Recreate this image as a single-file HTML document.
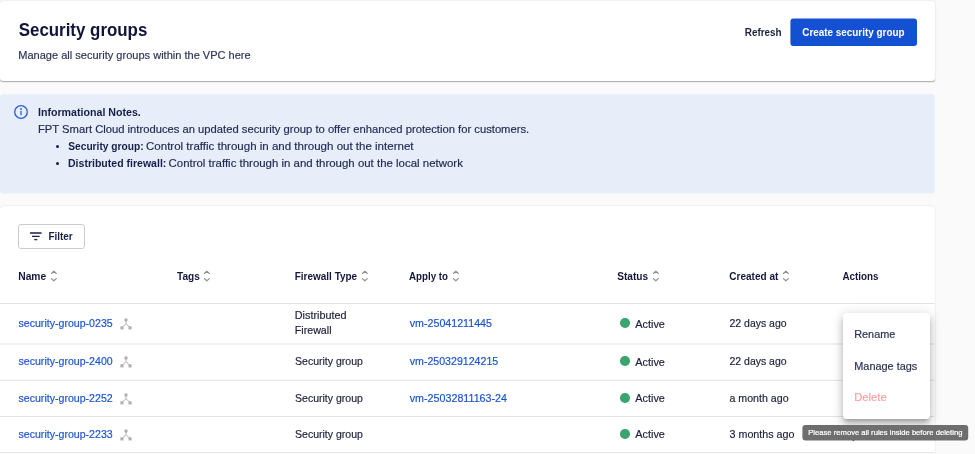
<!DOCTYPE html>
<html lang="en">
<head>
<meta charset="utf-8">
<title>Security groups</title>
<style>
*{box-sizing:border-box;margin:0;padding:0}
html,body{width:975px;height:454px;overflow:hidden;background:#fafafa;font-family:"Liberation Sans",sans-serif}
.t{position:absolute;white-space:nowrap;line-height:1;transform-origin:0 0}
.n{-webkit-text-stroke:.18px currentColor}
#hdr{position:absolute;left:0;top:1px;width:935px;height:80.4px;background:#fff;border-radius:3px;box-shadow:0 1.6px .9px -.8px rgba(0,0,0,.17),0 .9px .9px 0 rgba(0,0,0,.11),0 .8px 2.3px 0 rgba(0,0,0,.1)}
#filter{position:absolute;left:18px;top:224px;width:67px;height:25px;border:1px solid #cbcbcb;border-radius:3px;background:#fff}
.bul{position:absolute;left:55.5px;width:3.6px;height:3.6px;border-radius:50%;background:#14204a}
.dot{position:absolute;width:9.6px;height:9.6px;border-radius:50%;background:#3ba570}
#menu{position:absolute;left:843px;top:313px;width:86.8px;height:105.8px;background:#fff;border-radius:4px;box-shadow:0 3.8px 3.8px -2.3px rgba(0,0,0,.2),0 6px 7.7px .8px rgba(0,0,0,.14),0 2.3px 10.8px 1.5px rgba(0,0,0,.12)}
#t_tip{-webkit-text-stroke:.22px #fff}
#txt{position:absolute;left:0;top:0;width:975px;height:454px;will-change:transform}
svg{position:absolute;overflow:visible}
</style>
</head>
<body>
<div id="hdr"></div>
<svg style="left:0;top:0" width="975" height="60" viewBox="0 0 975 60"><rect x="790.4" y="18.5" width="126.6" height="27.6" rx="3" fill="#1450d2"/></svg>
<svg style="left:0;top:0" width="975" height="454" viewBox="0 0 975 454"><rect x="0" y="94.3" width="934.6" height="99.3" rx="3" fill="#e7edf9"/></svg>
<svg style="left:14px;top:104.9px" width="14" height="14" viewBox="0 0 14 14"><circle cx="7" cy="7" r="6.3" fill="none" stroke="#2a5bd7" stroke-width="1.3"/><rect x="6.35" y="5.9" width="1.3" height="4.3" fill="#2a5bd7"/><circle cx="7" cy="4" r=".9" fill="#2a5bd7"/></svg>
<div class="bul" style="top:144.8px"></div>
<div class="bul" style="top:161.5px"></div>
<svg style="left:0;top:0" width="975" height="454" viewBox="0 0 975 454"><rect x="-.4" y="205.8" width="935.6" height="260" rx="4.4" fill="none" stroke="#000" stroke-opacity=".045" stroke-width="1.2"/><rect x="0" y="206.2" width="934.8" height="260" rx="4" fill="#fff"/></svg>
<div id="filter"></div>
<svg style="left:29.6px;top:232.3px" width="12" height="9" viewBox="0 0 12 9"><path d="M0 1h11.6M2 4.3h7.6M4.3 7.6h3" stroke="#1a1f40" stroke-width="1.3" fill="none"/></svg>
<svg style="left:50.9px;top:270.4px" width="6" height="12" viewBox="0 0 6 12"><path d="M.4 3.5 2.85 1.3 5.3 3.5M.4 8.6 2.85 10.8 5.3 8.6" fill="none" stroke="#8e8e8e" stroke-width="1.15" stroke-linecap="round" stroke-linejoin="round"/></svg>
<svg style="left:204.3px;top:270.4px" width="6" height="12" viewBox="0 0 6 12"><path d="M.4 3.5 2.85 1.3 5.3 3.5M.4 8.6 2.85 10.8 5.3 8.6" fill="none" stroke="#8e8e8e" stroke-width="1.15" stroke-linecap="round" stroke-linejoin="round"/></svg>
<svg style="left:361.5px;top:270.4px" width="6" height="12" viewBox="0 0 6 12"><path d="M.4 3.5 2.85 1.3 5.3 3.5M.4 8.6 2.85 10.8 5.3 8.6" fill="none" stroke="#8e8e8e" stroke-width="1.15" stroke-linecap="round" stroke-linejoin="round"/></svg>
<svg style="left:452.7px;top:270.4px" width="6" height="12" viewBox="0 0 6 12"><path d="M.4 3.5 2.85 1.3 5.3 3.5M.4 8.6 2.85 10.8 5.3 8.6" fill="none" stroke="#8e8e8e" stroke-width="1.15" stroke-linecap="round" stroke-linejoin="round"/></svg>
<svg style="left:652.5px;top:270.4px" width="6" height="12" viewBox="0 0 6 12"><path d="M.4 3.5 2.85 1.3 5.3 3.5M.4 8.6 2.85 10.8 5.3 8.6" fill="none" stroke="#8e8e8e" stroke-width="1.15" stroke-linecap="round" stroke-linejoin="round"/></svg>
<svg style="left:782.8px;top:270.4px" width="6" height="12" viewBox="0 0 6 12"><path d="M.4 3.5 2.85 1.3 5.3 3.5M.4 8.6 2.85 10.8 5.3 8.6" fill="none" stroke="#8e8e8e" stroke-width="1.15" stroke-linecap="round" stroke-linejoin="round"/></svg>
<svg style="left:0;top:0" width="975" height="454" viewBox="0 0 975 454"><rect x="0" y="303.00" width="934.5" height="1" fill="#e2e2e2"/><rect x="0" y="343.50" width="934.5" height="1" fill="#e2e2e2"/><rect x="0" y="379.75" width="934.5" height="1" fill="#e2e2e2"/><rect x="0" y="415.95" width="934.5" height="1" fill="#e2e2e2"/><rect x="0" y="452.10" width="934.5" height="1" fill="#e2e2e2"/></svg>
<svg style="left:119.9px;top:318.3px" width="12" height="12" viewBox="0 0 12 12"><path d="M6 2V5.6L2 9.8M6 5.6 10 9.8" fill="none" stroke="#b0b0b0" stroke-width="1"/><circle cx="6" cy="2" r="1.7" fill="#b0b0b0"/><rect x=".4" y="8.3" width="3.1" height="3.1" fill="#b0b0b0"/><rect x="8.5" y="8.3" width="3.1" height="3.1" fill="#b0b0b0"/></svg>
<svg style="left:119.9px;top:356.1px" width="12" height="12" viewBox="0 0 12 12"><path d="M6 2V5.6L2 9.8M6 5.6 10 9.8" fill="none" stroke="#b0b0b0" stroke-width="1"/><circle cx="6" cy="2" r="1.7" fill="#b0b0b0"/><rect x=".4" y="8.3" width="3.1" height="3.1" fill="#b0b0b0"/><rect x="8.5" y="8.3" width="3.1" height="3.1" fill="#b0b0b0"/></svg>
<svg style="left:119.9px;top:392.9px" width="12" height="12" viewBox="0 0 12 12"><path d="M6 2V5.6L2 9.8M6 5.6 10 9.8" fill="none" stroke="#b0b0b0" stroke-width="1"/><circle cx="6" cy="2" r="1.7" fill="#b0b0b0"/><rect x=".4" y="8.3" width="3.1" height="3.1" fill="#b0b0b0"/><rect x="8.5" y="8.3" width="3.1" height="3.1" fill="#b0b0b0"/></svg>
<svg style="left:119.9px;top:429.3px" width="12" height="12" viewBox="0 0 12 12"><path d="M6 2V5.6L2 9.8M6 5.6 10 9.8" fill="none" stroke="#b0b0b0" stroke-width="1"/><circle cx="6" cy="2" r="1.7" fill="#b0b0b0"/><rect x=".4" y="8.3" width="3.1" height="3.1" fill="#b0b0b0"/><rect x="8.5" y="8.3" width="3.1" height="3.1" fill="#b0b0b0"/></svg>
<div class="dot" style="left:620px;top:318.4px"></div>
<div class="dot" style="left:620px;top:356.1px"></div>
<div class="dot" style="left:620px;top:393.3px"></div>
<div class="dot" style="left:620px;top:429.4px"></div>
<div id="menu"></div>
<svg style="left:0;top:0" width="975" height="454" viewBox="0 0 975 454"><circle cx="853.4" cy="440.3" r=".9" fill="#4a4a4a"/><rect x="802.4" y="425.1" width="165.8" height="15.4" rx="3" fill="#6e6e6e"/></svg>
<div id="txt">
<div class="t" id="t_title" style="left:18px;top:20px;font-size:19.1px;font-weight:700;color:#111437;transform:translate(0.75px,0.00px) scaleX(0.8844)">Security groups</div>
<div class="t n" id="t_sub" style="left:18px;top:50px;font-size:11.4px;font-weight:400;color:#2c3354;transform:translate(0.25px,0.00px) scaleX(0.9686)">Manage all security groups within the VPC here</div>
<div class="t" id="t_refresh" style="left:744px;top:27px;font-size:11.2px;font-weight:700;color:#1a1f40;transform:translate(0.75px,0.00px) scaleX(0.8859)">Refresh</div>
<div class="t" id="t_btn" style="left:802px;top:27px;font-size:11.2px;font-weight:700;color:#ffffff;transform:translate(0.25px,0.00px) scaleX(0.8848)">Create security group</div>
<div class="t" id="t_i1" style="left:38px;top:107px;font-size:11.4px;font-weight:700;color:#14204a;transform:translate(0.00px,0.00px) scaleX(0.9333)">Informational Notes.</div>
<div class="t n" id="t_i2" style="left:38px;top:124px;font-size:11.4px;font-weight:400;color:#222c55;transform:translate(0.00px,0.00px) scaleX(0.9853)">FPT Smart Cloud introduces an updated security group to offer enhanced protection for customers.</div>
<div class="t" id="t_i3a" style="left:68px;top:141px;font-size:11.4px;font-weight:700;color:#14204a;transform:translate(0.25px,0.00px) scaleX(0.8952)">Security group:</div>
<div class="t n" id="t_i3b" style="left:146px;top:141px;font-size:11.4px;font-weight:400;color:#222c55;transform:translate(0.00px,0.00px) scaleX(1.0114)">Control traffic through in and through out the internet</div>
<div class="t" id="t_i4a" style="left:68px;top:158px;font-size:11.4px;font-weight:700;color:#14204a;transform:translate(0.00px,0.00px) scaleX(0.9248)">Distributed firewall:</div>
<div class="t n" id="t_i4b" style="left:168px;top:158px;font-size:11.4px;font-weight:400;color:#222c55;transform:translate(0.50px,0.00px) scaleX(1.0048)">Control traffic through in and through out the local network</div>
<div class="t" id="t_filter" style="left:48px;top:231px;font-size:11.2px;font-weight:700;color:#1a1f40;transform:translate(0.50px,0.00px) scaleX(0.8826)">Filter</div>
<div class="t" id="t_h1" style="left:18px;top:271px;font-size:11.2px;font-weight:700;color:#14183b;transform:translate(0.25px,0.00px) scaleX(0.9177)">Name</div>
<div class="t" id="t_h2" style="left:177px;top:271px;font-size:11.2px;font-weight:700;color:#14183b;transform:translate(0.00px,0.00px) scaleX(0.9042)">Tags</div>
<div class="t" id="t_h3" style="left:294px;top:271px;font-size:11.2px;font-weight:700;color:#14183b;transform:translate(0.75px,0.00px) scaleX(0.8910)">Firewall Type</div>
<div class="t" id="t_h4" style="left:408px;top:271px;font-size:11.2px;font-weight:700;color:#14183b;transform:translate(1.00px,0.00px) scaleX(0.8716)">Apply to</div>
<div class="t" id="t_h5" style="left:617px;top:271px;font-size:11.2px;font-weight:700;color:#14183b;transform:translate(0.25px,0.00px) scaleX(0.9046)">Status</div>
<div class="t" id="t_h6" style="left:729px;top:271px;font-size:11.2px;font-weight:700;color:#14183b;transform:translate(0.25px,0.00px) scaleX(0.8968)">Created at</div>
<div class="t" id="t_h7" style="left:842px;top:271px;font-size:11.2px;font-weight:700;color:#14183b;transform:translate(0.50px,0.00px) scaleX(0.8783)">Actions</div>
<div class="t n" id="t_n0" style="left:18px;top:318px;font-size:11.2px;font-weight:400;color:#1b52cf;transform:translate(0.50px,0.00px) scaleX(0.9463)">security-group-0235</div>
<div class="t n" id="t_n1" style="left:18px;top:356px;font-size:11.2px;font-weight:400;color:#1b52cf;transform:translate(0.50px,0.00px) scaleX(0.9463)">security-group-2400</div>
<div class="t n" id="t_n2" style="left:18px;top:393px;font-size:11.2px;font-weight:400;color:#1b52cf;transform:translate(0.50px,0.00px) scaleX(0.9464)">security-group-2252</div>
<div class="t n" id="t_n3" style="left:18px;top:429px;font-size:11.2px;font-weight:400;color:#1b52cf;transform:translate(0.50px,0.00px) scaleX(0.9463)">security-group-2233</div>
<div class="t n" id="t_f0a" style="left:294px;top:310px;font-size:11.2px;font-weight:400;color:#1c1f3a;transform:translate(0.75px,0.00px) scaleX(0.9675)">Distributed</div>
<div class="t n" id="t_f0b" style="left:294px;top:325px;font-size:11.2px;font-weight:400;color:#1c1f3a;transform:translate(0.75px,0.00px) scaleX(0.9544)">Firewall</div>
<div class="t n" id="t_f1" style="left:295px;top:356px;font-size:11.2px;font-weight:400;color:#1c1f3a;transform:translate(0.00px,0.00px) scaleX(0.9411)">Security group</div>
<div class="t n" id="t_f2" style="left:295px;top:393px;font-size:11.2px;font-weight:400;color:#1c1f3a;transform:translate(0.00px,0.00px) scaleX(0.9411)">Security group</div>
<div class="t n" id="t_f3" style="left:295px;top:429px;font-size:11.2px;font-weight:400;color:#1c1f3a;transform:translate(0.00px,0.00px) scaleX(0.9411)">Security group</div>
<div class="t n" id="t_v0" style="left:409px;top:318px;font-size:11.2px;font-weight:400;color:#1b52cf;transform:translate(0.75px,0.00px) scaleX(0.9535)">vm-25041211445</div>
<div class="t n" id="t_v1" style="left:409px;top:356px;font-size:11.2px;font-weight:400;color:#1b52cf;transform:translate(0.75px,0.00px) scaleX(0.9479)">vm-250329124215</div>
<div class="t n" id="t_v2" style="left:409px;top:393px;font-size:11.2px;font-weight:400;color:#1b52cf;transform:translate(0.75px,0.00px) scaleX(0.9575)">vm-25032811163-24</div>
<div class="t n" id="t_a0" style="left:635px;top:319px;font-size:11.2px;font-weight:400;color:#1c1f3a;transform:translate(0.25px,0.00px) scaleX(0.9734)">Active</div>
<div class="t n" id="t_a1" style="left:635px;top:357px;font-size:11.2px;font-weight:400;color:#1c1f3a;transform:translate(0.25px,0.00px) scaleX(0.9734)">Active</div>
<div class="t n" id="t_a2" style="left:635px;top:393px;font-size:11.2px;font-weight:400;color:#1c1f3a;transform:translate(0.25px,0.00px) scaleX(0.9734)">Active</div>
<div class="t n" id="t_a3" style="left:635px;top:429px;font-size:11.2px;font-weight:400;color:#1c1f3a;transform:translate(0.25px,0.00px) scaleX(0.9734)">Active</div>
<div class="t n" id="t_c0" style="left:729px;top:318px;font-size:11.2px;font-weight:400;color:#1c1f3a;transform:translate(0.50px,0.00px) scaleX(0.9361)">22 days ago</div>
<div class="t n" id="t_c1" style="left:729px;top:356px;font-size:11.2px;font-weight:400;color:#1c1f3a;transform:translate(0.50px,0.00px) scaleX(0.9361)">22 days ago</div>
<div class="t n" id="t_c2" style="left:729px;top:393px;font-size:11.2px;font-weight:400;color:#1c1f3a;transform:translate(0.50px,0.00px) scaleX(0.9496)">a month ago</div>
<div class="t n" id="t_c3" style="left:729px;top:429px;font-size:11.2px;font-weight:400;color:#1c1f3a;transform:translate(0.50px,0.00px) scaleX(0.9590)">3 months ago</div>
<div class="t n" id="t_m1" style="left:854px;top:328px;font-size:11.6px;font-weight:400;color:#272d52;transform:translate(0.25px,0.00px) scaleX(0.9357)">Rename</div>
<div class="t n" id="t_m2" style="left:854px;top:360px;font-size:11.6px;font-weight:400;color:#272d52;transform:translate(0.25px,0.00px) scaleX(0.9394)">Manage tags</div>
<div class="t n" id="t_m3" style="left:854px;top:391px;font-size:11.6px;font-weight:400;color:#f99d9d;transform:translate(0.25px,0.00px) scaleX(0.9691)">Delete</div>
<div class="t n" id="t_tip" style="left:808px;top:429px;font-size:7.6px;font-weight:400;color:#ffffff;transform:translate(0.25px,0.00px) scaleX(1.0062)">Please remove all rules inside before deleting</div>
</div>
</body>
</html>
